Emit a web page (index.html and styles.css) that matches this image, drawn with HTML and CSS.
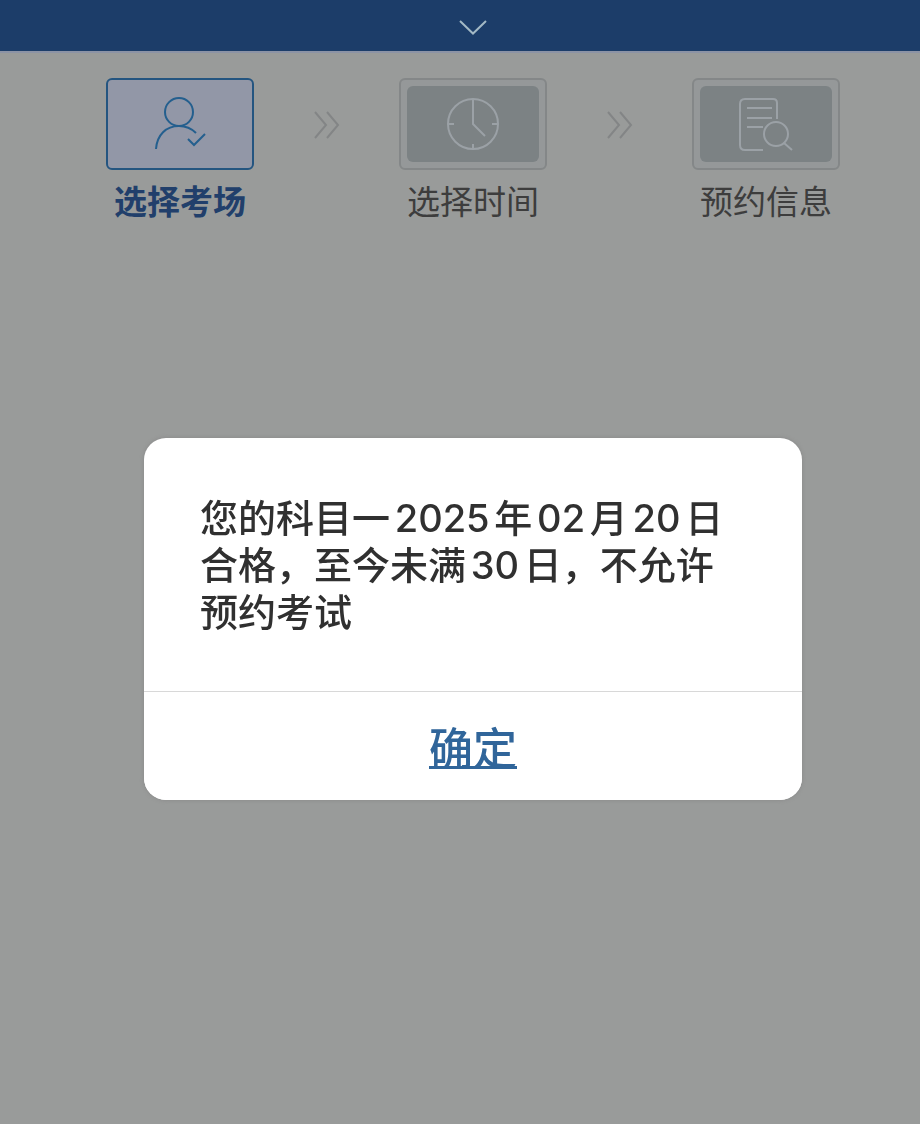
FILE: index.html
```
<!DOCTYPE html>
<html lang="zh-CN">
<head>
  <meta charset="UTF-8" />
  <meta name="viewport" content="width=device-width, initial-scale=1.0"/>
  <title>考试预约</title>
  <link rel="stylesheet" href="styles.css">
</head>
<body>

<header class="topbar">
  <svg class="chevron" viewBox="0 0 30 18"><path d="M2 2 L15 14.500 L28 2"/></svg>
</header>

<main>
  <ol class="steps">
    <li class="step active">
      <div class="step-box">
        <svg class="icon" viewBox="0 0 60 60">
          <circle cx="29" cy="18" r="14"/>
          <path d="M6 55 C7 41 16 32 29 32 C36 32 42 35 46 39"/>
          <path d="M38 45 L44 51 L55 40"/>
        </svg>
      </div>
      <span class="step-name">选择考场</span>
    </li>
    <li class="arrow">
      <svg viewBox="0 0 28 30"><path d="M2 3 L13 16 L2 29 M14 3 L25 16 L14 29"/></svg>
    </li>
    <li class="step">
      <div class="step-box">
        <svg class="icon" viewBox="0 0 60 60">
          <circle cx="30" cy="30" r="25"/>
          <path d="M30 5 V30 L42 42 M30 50 V55 M5 30 H11 M49 30 H55"/>
        </svg>
      </div>
      <span class="step-name">选择时间</span>
    </li>
    <li class="arrow">
      <svg viewBox="0 0 28 30"><path d="M2 3 L13 16 L2 29 M14 3 L25 16 L14 29"/></svg>
    </li>
    <li class="step">
      <div class="step-box">
        <svg class="icon" viewBox="0 0 60 60">
          <path d="M41 25 V9 Q41 5 37 5 H9 Q4 5 4 10 V51 Q4 56 9 56 H27"/>
          <path d="M11 14 H36 M11 24 H36 M11 33 H27"/>
          <circle cx="40" cy="40" r="12"/>
          <path d="M48 49 L56 56"/>
        </svg>
      </div>
      <span class="step-name">预约信息</span>
    </li>
  </ol>
</main>

<div class="overlay">
  <div class="dialog" role="alertdialog" aria-modal="true" aria-describedby="msg">
    <p class="message" id="msg">您的科目一2025年02月20日合格，至今未满30日，不允许预约考试</p>
    <button class="btn" type="button">确定</button>
  </div>
</div>

</body>
</html>
```

FILE: styles.css
```
* {
  margin: 0; padding: 0; box-sizing: border-box;
}

body {
  background: #999b9a;
  color: #3d3d3d;
  font-family: Inter, 'Noto Sans CJK SC', sans-serif;
  min-height: 100vh;
}

svg {
  fill: none;
  stroke: currentColor;
  stroke-width: 2;
}

.topbar {
  display: flex;
  align-items: center;
  justify-content: center;
  height: 53px;
  padding-left: 26px;
  background: #1c3d69;
  border-bottom: 2px solid #8c93a5;
}

.chevron {
  width: 30px;
  height: 18px;
  margin-top: 4px;
  color: #a3b9c5;
}

.steps {
  display: flex;
  justify-content: center;
  list-style: none;
  padding: 25px 0 0 26px;
}

.step {
  width: 148px;
  text-align: center;
}

.step-box {
  height: 92px;
  padding: 6px;
  border: 2px solid #848788;
  border-radius: 6px;
  background: #959899;
  color: #9ba1a6;
}

.active .step-box {
  border-color: #245580;
  background: #9297a7;
  color: #245f8e;
}

.icon {
  display: block;
  width: 100%;
  height: 100%;
  padding: 8px 0;
  border-radius: 6px;
  background: #7c8284;
}

.active .icon {
  background: none;
}

.step-name {
  display: block;
  margin-top: 8px;
  font-size: 33px;
  line-height: 48px;
  white-space: nowrap;
}

.active .step-name {
  color: #213f6b;
  font-weight: 700;
}

.arrow {
  display: flex;
  align-items: center;
  justify-content: center;
  width: 145px;
  height: 92px;
  color: #838586;
}

.arrow svg {
  width: 28px;
  height: 30px;
}

.overlay {
  position: fixed;
  inset: 0;
  display: flex;
  align-items: center;
  justify-content: center;
  padding: 114px 0 0 26px;
}

.dialog {
  width: 658px;
  max-width: 90%;
  background: #fff;
  border-radius: 22px;
  box-shadow: 0 0 4px #888;
  overflow: hidden;
}

.message {
  padding: 57px 56px 55px;
  color: #303030;
  font-size: 38px;
  font-weight: 500;
  line-height: 47px;
  text-autospace: normal;
}

.btn {
  display: block;
  width: 100%;
  height: 109px;
  border: none;
  border-top: 1px solid #d8d8d8;
  background: #fff;
  color: #30659a;
  font-family: inherit;
  font-size: 44px;
  font-weight: 500;
  text-decoration: underline;
  text-decoration-thickness: 3px;
  text-underline-offset: 1px;
  cursor: pointer;
}
```
